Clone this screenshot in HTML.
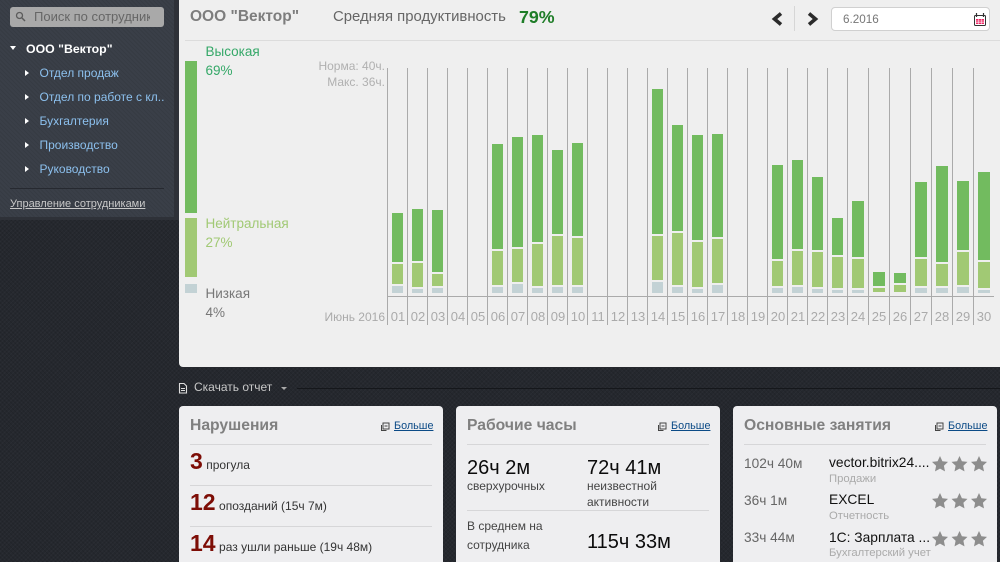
<!DOCTYPE html>
<html lang="ru"><head><meta charset="utf-8"><title>Вектор</title>
<style>
html,body{margin:0;padding:0;width:1000px;height:562px;overflow:hidden}
body{position:relative;background-color:#25282e;background-image:repeating-linear-gradient(45deg,rgba(0,0,0,.10) 0 1px,transparent 1px 3px),repeating-linear-gradient(-45deg,rgba(255,255,255,.025) 0 1px,transparent 1px 3px);font-family:"Liberation Sans",sans-serif;color:#222}
.a{position:absolute;white-space:nowrap}
#side{position:absolute;left:0;top:0;width:174px;height:217px;background-color:#3a3f48;background-image:repeating-linear-gradient(45deg,rgba(0,0,0,.07) 0 1px,transparent 1px 3px)}
#sideb{position:absolute;left:0;top:0;width:179px;height:220px;background:#2e3138}
#search{position:absolute;left:10px;top:7px;width:154px;height:20px;border-radius:3px;background:#a9a9a9;color:#666;font-size:13px;line-height:20px}
.m{position:absolute;left:39.5px;color:#8cc0ee;font-size:12px;line-height:16px;white-space:nowrap}
.t{position:absolute;width:0;height:0;left:25px;border-left:4px solid #fff;border-top:3px solid transparent;border-bottom:3px solid transparent}
#main{position:absolute;left:179px;top:-5px;width:821px;height:372px;background:#efefef;border-radius:0 0 0 4px}
.v{position:absolute;top:68px;width:1px;height:257px;background:#aaa}
.b{position:absolute}
.g{background:#72bb5f}.l{background:#a1c974}.s{background:#c3d2d5}
.d{position:absolute;top:309px;font-size:13px;line-height:16px;color:#aaa;text-align:center;width:20px}
.card{position:absolute;top:406px;width:264px;height:170px;background:#eeeef0;border-radius:4px}
.h{position:absolute;left:11px;top:11px;font-size:15.7px;font-weight:bold;color:#808080;line-height:18px;white-space:nowrap}
.mo{position:absolute;left:215px;top:14px;font-size:10.8px;color:#0b4a86;text-decoration:underline;line-height:13px}
.ic{position:absolute;left:200.500px;top:16px}
.ln{position:absolute;left:11px;width:242px;height:1px;background:#d6d6d8}
.big{font-size:23px;font-weight:bold;color:#7d0d06;margin-right:-1px}
.tx{font-size:12px;color:#333}
.hh{font-size:20px;color:#0b0b0b;line-height:22px}
.sm{font-size:12px;color:#444;line-height:16px}
</style></head><body>
<div id="sideb"></div><div id="side"></div>
<div id="search"><svg style="position:absolute;left:5px;top:4px" width="11" height="11" viewBox="0 0 11 11"><circle cx="4.500" cy="4.500" r="3" fill="none" stroke="#5c5c5c" stroke-width="1.300"/><path d="M7 7l3 3" stroke="#5c5c5c" stroke-width="1.500"/></svg><span class="a" style="left:24px;width:116px;overflow:hidden">Поиск по сотрудник</span></div>
<div class="a" style="left:10px;top:46px;width:0;height:0;border-top:4px solid #fff;border-left:3.500px solid transparent;border-right:3.500px solid transparent"></div>
<div class="a" style="left:26px;top:41px;font-size:12.300px;font-weight:bold;color:#fff;line-height:16px">ООО "Вектор"</div>
<div class="t" style="top:70px"></div><div class="m" style="top:65px">Отдел продаж</div>
<div class="t" style="top:94px"></div><div class="m" style="top:89px">Отдел по работе с кл..</div>
<div class="t" style="top:118px"></div><div class="m" style="top:113px">Бухгалтерия</div>
<div class="t" style="top:142px"></div><div class="m" style="top:137px">Производство</div>
<div class="t" style="top:166px"></div><div class="m" style="top:161px">Руководство</div>
<div class="a" style="left:10px;top:188px;width:154px;height:1px;background:#262930"></div>
<div class="a" style="left:10px;top:197px;font-size:11px;color:#c8c8c8;text-decoration:underline;line-height:14px">Управление сотрудниками</div>

<div id="main"></div>
<div class="a" style="left:190px;top:7px;font-size:15.500px;font-weight:bold;color:#7d7d7d;line-height:20px">ООО "Вектор"</div>
<div class="a" style="left:333px;top:7px;font-size:14.900px;color:#666;line-height:20px">Средняя продуктивность</div>
<div class="a" style="left:519px;top:7px;font-size:17.800px;font-weight:bold;color:#1f7d28;line-height:20px">79%</div>
<div class="a" style="left:185px;top:40px;width:815px;height:1px;background:#dcdcdc"></div>
<svg class="a" style="left:770px;top:12px" width="14" height="14" viewBox="0 0 14 14"><path d="M11 1.500L4.500 7l6.500 5.500" fill="none" stroke="#2b2b2b" stroke-width="3.600"/></svg>
<div class="a" style="left:794px;top:6px;width:1px;height:25px;background:#d6d6d6"></div>
<svg class="a" style="left:806px;top:12px" width="14" height="14" viewBox="0 0 14 14"><path d="M3 1.500L9.500 7L3 12.500" fill="none" stroke="#2b2b2b" stroke-width="3.600"/></svg>
<div class="a" style="left:831px;top:7px;width:159px;height:24px;box-sizing:border-box;background:#fff;border:1px solid #d0d0d0;border-radius:4px;font-size:11.700px;line-height:23px;color:#777;padding-left:11px">6.2016</div>
<svg class="a" style="left:974px;top:13px" width="12" height="13" viewBox="0 0 12 13"><rect x=".5" y="2.500" width="11" height="10" rx="1" fill="#fff" stroke="#333"/><rect x="2" y="6" width="8" height="5" fill="#ee2a66"/><path d="M2.500 0v4M9.500 0v4" stroke="#333" stroke-width="1.200"/><path d="M2 8h8M2 9.700h8M4.500 6v5M7.500 6v5" stroke="#fff" stroke-width=".5"/></svg>

<div class="a" style="left:205.500px;top:42px;font-size:13.500px;color:#35a868;line-height:19px">Высокая<br>69%</div>
<div class="b g" style="left:185px;top:61px;width:12px;height:152px"></div>
<div class="a" style="left:205.500px;top:214px;font-size:13.500px;color:#a1c974;line-height:19px">Нейтральная<br>27%</div>
<div class="b l" style="left:185px;top:218px;width:12px;height:59px"></div>
<div class="a" style="left:205.500px;top:284px;font-size:13.500px;color:#777;line-height:19px">Низкая<br>4%</div>
<div class="b s" style="left:185px;top:284px;width:12px;height:9px"></div>
<div class="a" style="right:615px;top:59px;font-size:12px;color:#b0b0b0;line-height:15px">Норма: 40ч.</div>
<div class="a" style="right:615px;top:75px;font-size:12px;color:#b0b0b0;line-height:15px">Макс. 36ч.</div>
<div class="a" style="right:615px;top:309px;font-size:12px;color:#aaa;line-height:16px">Июнь 2016</div>
<div class="a" style="left:387px;top:296px;width:607px;height:1px;background:#aaa"></div>
<div class="v" style="left:387px"></div><div class="v" style="left:407px"></div><div class="v" style="left:427px"></div><div class="v" style="left:447px"></div><div class="v" style="left:467px"></div><div class="v" style="left:487px"></div><div class="v" style="left:507px"></div><div class="v" style="left:527px"></div><div class="v" style="left:547px"></div><div class="v" style="left:567px"></div><div class="v" style="left:587px"></div><div class="v" style="left:607px"></div><div class="v" style="left:627px"></div><div class="v" style="left:647px"></div><div class="v" style="left:667px"></div><div class="v" style="left:687px"></div><div class="v" style="left:707px"></div><div class="v" style="left:727px"></div><div class="v" style="left:747px"></div><div class="v" style="left:767px"></div><div class="v" style="left:787px"></div><div class="v" style="left:807px"></div><div class="v" style="left:827px"></div><div class="v" style="left:847px"></div><div class="v" style="left:868px"></div><div class="v" style="left:889px"></div><div class="v" style="left:910px"></div><div class="v" style="left:931px"></div><div class="v" style="left:952px"></div><div class="v" style="left:973px"></div>
<div class="d" style="left:388px">01</div><div class="d" style="left:408px">02</div><div class="d" style="left:428px">03</div><div class="d" style="left:448px">04</div><div class="d" style="left:468px">05</div><div class="d" style="left:488px">06</div><div class="d" style="left:508px">07</div><div class="d" style="left:528px">08</div><div class="d" style="left:548px">09</div><div class="d" style="left:568px">10</div><div class="d" style="left:588px">11</div><div class="d" style="left:608px">12</div><div class="d" style="left:628px">13</div><div class="d" style="left:648px">14</div><div class="d" style="left:668px">15</div><div class="d" style="left:688px">16</div><div class="d" style="left:708px">17</div><div class="d" style="left:728px">18</div><div class="d" style="left:748px">19</div><div class="d" style="left:768px">20</div><div class="d" style="left:788px">21</div><div class="d" style="left:808px">22</div><div class="d" style="left:828px">23</div><div class="d" style="left:848px">24</div><div class="d" style="left:869px">25</div><div class="d" style="left:890px">26</div><div class="d" style="left:911px">27</div><div class="d" style="left:932px">28</div><div class="d" style="left:953px">29</div><div class="d" style="left:974px">30</div>

<div class="b g" style="left:392px;top:213px;width:11px;height:49px"></div><div class="b l" style="left:392px;top:264px;width:11px;height:20px"></div><div class="b s" style="left:392px;top:286px;width:11px;height:7px"></div>
<div class="b g" style="left:412px;top:209px;width:11px;height:52px"></div><div class="b l" style="left:412px;top:263px;width:11px;height:24px"></div><div class="b s" style="left:412px;top:289px;width:11px;height:4px"></div>
<div class="b g" style="left:432px;top:210px;width:11px;height:62px"></div><div class="b l" style="left:432px;top:274px;width:11px;height:12px"></div><div class="b s" style="left:432px;top:288px;width:11px;height:5px"></div>
<div class="b g" style="left:492px;top:144px;width:11px;height:105px"></div><div class="b l" style="left:492px;top:251px;width:11px;height:34px"></div><div class="b s" style="left:492px;top:287px;width:11px;height:6px"></div>
<div class="b g" style="left:512px;top:137px;width:11px;height:110px"></div><div class="b l" style="left:512px;top:249px;width:11px;height:33px"></div><div class="b s" style="left:512px;top:284px;width:11px;height:9px"></div>
<div class="b g" style="left:532px;top:135px;width:11px;height:107px"></div><div class="b l" style="left:532px;top:244px;width:11px;height:42px"></div><div class="b s" style="left:532px;top:288px;width:11px;height:5px"></div>
<div class="b g" style="left:552px;top:150px;width:11px;height:84px"></div><div class="b l" style="left:552px;top:236px;width:11px;height:49px"></div><div class="b s" style="left:552px;top:287px;width:11px;height:6px"></div>
<div class="b g" style="left:572px;top:143px;width:11px;height:93px"></div><div class="b l" style="left:572px;top:238px;width:11px;height:47px"></div><div class="b s" style="left:572px;top:287px;width:11px;height:6px"></div>
<div class="b g" style="left:652px;top:89px;width:11px;height:145px"></div><div class="b l" style="left:652px;top:236px;width:11px;height:44px"></div><div class="b s" style="left:652px;top:282px;width:11px;height:11px"></div>
<div class="b g" style="left:672px;top:125px;width:11px;height:106px"></div><div class="b l" style="left:672px;top:233px;width:11px;height:52px"></div><div class="b s" style="left:672px;top:287px;width:11px;height:6px"></div>
<div class="b g" style="left:692px;top:135px;width:11px;height:105px"></div><div class="b l" style="left:692px;top:242px;width:11px;height:45px"></div><div class="b s" style="left:692px;top:289px;width:11px;height:4px"></div>
<div class="b g" style="left:712px;top:134px;width:11px;height:103px"></div><div class="b l" style="left:712px;top:239px;width:11px;height:44px"></div><div class="b s" style="left:712px;top:285px;width:11px;height:8px"></div>
<div class="b g" style="left:772px;top:165px;width:11px;height:94px"></div><div class="b l" style="left:772px;top:261px;width:11px;height:25px"></div><div class="b s" style="left:772px;top:288px;width:11px;height:5px"></div>
<div class="b g" style="left:792px;top:160px;width:11px;height:89px"></div><div class="b l" style="left:792px;top:251px;width:11px;height:34px"></div><div class="b s" style="left:792px;top:287px;width:11px;height:6px"></div>
<div class="b g" style="left:812px;top:177px;width:11px;height:73px"></div><div class="b l" style="left:812px;top:252px;width:11px;height:35px"></div><div class="b s" style="left:812px;top:289px;width:11px;height:4px"></div>
<div class="b g" style="left:832px;top:218px;width:11px;height:37px"></div><div class="b l" style="left:832px;top:257px;width:11px;height:31px"></div><div class="b s" style="left:832px;top:290px;width:11px;height:3px"></div>
<div class="b g" style="left:852px;top:201px;width:12px;height:56px"></div><div class="b l" style="left:852px;top:259px;width:12px;height:29px"></div><div class="b s" style="left:852px;top:290px;width:12px;height:3px"></div>
<div class="b g" style="left:873px;top:272px;width:12px;height:14px"></div><div class="b l" style="left:873px;top:288px;width:12px;height:4px"></div>
<div class="b g" style="left:894px;top:273px;width:12px;height:10px"></div><div class="b l" style="left:894px;top:285px;width:12px;height:7px"></div>
<div class="b g" style="left:915px;top:182px;width:12px;height:75px"></div><div class="b l" style="left:915px;top:259px;width:12px;height:27px"></div><div class="b s" style="left:915px;top:288px;width:12px;height:5px"></div>
<div class="b g" style="left:936px;top:166px;width:12px;height:96px"></div><div class="b l" style="left:936px;top:264px;width:12px;height:22px"></div><div class="b s" style="left:936px;top:288px;width:12px;height:5px"></div>
<div class="b g" style="left:957px;top:181px;width:12px;height:69px"></div><div class="b l" style="left:957px;top:252px;width:12px;height:33px"></div><div class="b s" style="left:957px;top:287px;width:12px;height:6px"></div>
<div class="b g" style="left:978px;top:172px;width:12px;height:88px"></div><div class="b l" style="left:978px;top:262px;width:12px;height:26px"></div><div class="b s" style="left:978px;top:290px;width:12px;height:3px"></div>

<svg class="a" style="left:178px;top:382px" width="10" height="12" viewBox="0 0 10 12"><path d="M1.500 1.500h4.500l2.500 2.500v7h-7zM3 6.500h4M3 8.500h4" fill="none" stroke="#ddd" stroke-width="1.100"/></svg>
<div class="a" style="left:194px;top:380px;font-size:12px;color:#c8c8c8;line-height:15px">Скачать отчет</div>
<div class="a" style="left:281px;top:387px;width:0;height:0;border-top:3px solid #aaa;border-left:3px solid transparent;border-right:3px solid transparent"></div>
<div class="a" style="left:297px;top:388px;width:703px;height:1px;background:#15171b"></div>

<div class="card" style="left:179px">
<div class="h">Нарушения</div><svg class="ic" width="10" height="10" viewBox="0 0 10 10"><path d="M1.500 3v5.500h5" fill="none" stroke="#444"/><rect x="3" y="1" width="6" height="6" fill="none" stroke="#444"/><path d="M4.500 4h3" stroke="#444"/></svg><div class="mo">Больше</div>
<div class="ln" style="top:38px"></div><div class="ln" style="top:79px"></div><div class="ln" style="top:120px"></div>
<div class="a" style="left:11px;top:43px;line-height:24px"><span class="big">3</span> <span class="tx">прогула</span></div>
<div class="a" style="left:11px;top:84px;line-height:24px"><span class="big">12</span> <span class="tx">опозданий (15ч 7м)</span></div>
<div class="a" style="left:11px;top:125px;line-height:24px"><span class="big">14</span> <span class="tx">раз ушли раньше (19ч 48м)</span></div>
</div>

<div class="card" style="left:456px">
<div class="h">Рабочие часы</div><svg class="ic" width="10" height="10" viewBox="0 0 10 10"><path d="M1.500 3v5.500h5" fill="none" stroke="#444"/><rect x="3" y="1" width="6" height="6" fill="none" stroke="#444"/><path d="M4.500 4h3" stroke="#444"/></svg><div class="mo">Больше</div>
<div class="ln" style="top:38px"></div><div class="ln" style="top:104px"></div>
<div class="a hh" style="left:11px;top:51px">26ч 2м</div><div class="a sm" style="left:11px;top:71.500px">сверхурочных</div>
<div class="a hh" style="left:131px;top:51px">72ч 41м</div><div class="a sm" style="left:131px;top:71.500px">неизвестной<br>активности</div>
<div class="a sm" style="left:11px;top:111px;line-height:19px">В среднем на<br>сотрудника</div>
<div class="a hh" style="left:131px;top:125px">115ч 33м</div>
</div>

<div class="card" style="left:733px">
<div class="h">Основные занятия</div><svg class="ic" width="10" height="10" viewBox="0 0 10 10"><path d="M1.500 3v5.500h5" fill="none" stroke="#444"/><rect x="3" y="1" width="6" height="6" fill="none" stroke="#444"/><path d="M4.500 4h3" stroke="#444"/></svg><div class="mo">Больше</div>
<div class="ln" style="top:38px"></div>
<div class="a" style="left:11px;top:50px;font-size:13.700px;color:#666;line-height:16px">102ч 40м</div>
<div class="a" style="left:96px;top:49px;font-size:13.800px;color:#111;line-height:16px">vector.bitrix24....</div>
<div class="a" style="left:96px;top:66px;font-size:11.300px;color:#aaa;line-height:14px">Продажи</div>
<div class="a" style="left:11px;top:87px;font-size:13.700px;color:#666;line-height:16px">36ч 1м</div>
<div class="a" style="left:96px;top:86px;font-size:13.800px;color:#111;line-height:16px">EXCEL</div>
<div class="a" style="left:96px;top:103px;font-size:11.300px;color:#aaa;line-height:14px">Отчетность</div>
<div class="a" style="left:11px;top:124px;font-size:13.700px;color:#666;line-height:16px">33ч 44м</div>
<div class="a" style="left:96px;top:123.500px;font-size:13.800px;color:#111;line-height:16px">1С: Зарплата ...</div>
<div class="a" style="left:96px;top:140px;font-size:11.300px;color:#aaa;line-height:14px">Бухгалтерский учет</div>
<svg class="a" style="left:199px;top:50px" width="56" height="92" viewBox="0 0 56 92" fill="#8d8d8d">
<path d="M8 0l2.400 5.200 5.600.7-4.100 3.900 1.100 5.600L8 12.600l-5 2.800 1.100-5.600L0 5.900l5.600-.7z"/>
<path d="M27.500 0l2.400 5.200 5.600.7-4.100 3.900 1.100 5.600-5-2.800-5 2.800 1.100-5.600-4.100-3.900 5.600-.7z"/>
<path d="M47 0l2.400 5.200 5.600.7-4.100 3.900 1.100 5.600-5-2.800-5 2.800 1.100-5.600L39 5.900l5.600-.7z"/>
<path d="M8 37l2.400 5.200 5.600.7-4.100 3.900 1.100 5.600-5-2.800-5 2.800 1.100-5.600L0 42.900l5.600-.7z"/>
<path d="M27.500 37l2.400 5.200 5.600.7-4.100 3.900 1.100 5.600-5-2.800-5 2.800 1.100-5.600-4.100-3.900 5.600-.7z"/>
<path d="M47 37l2.400 5.200 5.600.7-4.100 3.900 1.100 5.600-5-2.800-5 2.800 1.100-5.600L39 42.900l5.600-.7z"/>
<path d="M8 75l2.400 5.200 5.600.7-4.100 3.900 1.100 5.600-5-2.800-5 2.800 1.100-5.600L0 80.900l5.600-.7z"/>
<path d="M27.500 75l2.400 5.200 5.600.7-4.100 3.900 1.100 5.600-5-2.800-5 2.800 1.100-5.600-4.100-3.900 5.600-.7z"/>
<path d="M47 75l2.400 5.200 5.600.7-4.100 3.900 1.100 5.600-5-2.800-5 2.800 1.100-5.600L39 80.900l5.600-.7z"/>
</svg>
</div>
</body></html>
